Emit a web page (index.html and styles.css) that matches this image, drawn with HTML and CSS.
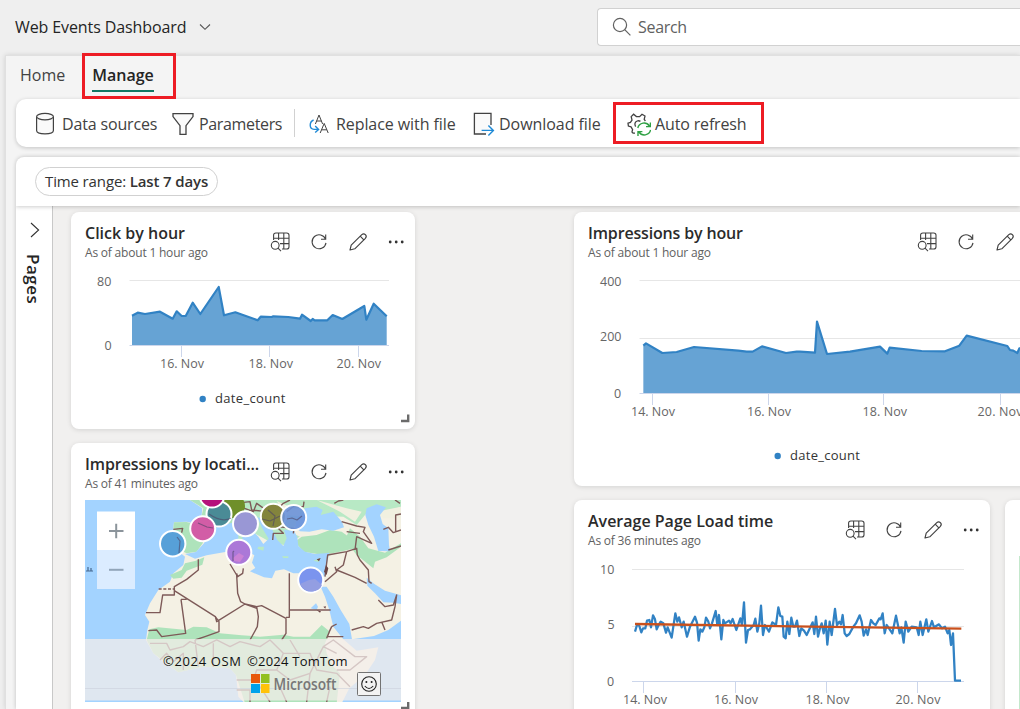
FILE: index.html
```html
<!DOCTYPE html>
<html lang="en">
<head>
<meta charset="utf-8">
<title>Web Events Dashboard</title>
<link rel="stylesheet" href="styles.css">
</head>
<body>
<svg class="defs" width="0" height="0">
  <symbol id="explore" viewBox="0 0 20 20"><g fill="none" stroke="#424242" stroke-width="1.1">
    <path d="M3.6 8V3.3Q3.6 1 5.9 1H16.7Q19 1 19 3.3V14.7Q19 17 16.7 17H12M8.6 1V8M13.8 1V17M3.6 6.2H19M10 11.6H19"/>
    <circle cx="5.2" cy="13.3" r="3.9"/><path d="M8 16.2L11 19.2"/></g></symbol>
  <symbol id="reload" viewBox="0 0 20 20"><path d="M16.6 7.2A7 7 0 1 0 17 10.8M16.7 2.6V7.3H12" fill="none" stroke="#424242" stroke-width="1.1"/></symbol>
  <symbol id="pencil" viewBox="0 0 20 20"><path d="M2 18L3.2 13.2L13.8 2.6Q15.7 1 17.4 2.7T17.4 6.3L6.8 16.8ZM12.2 4.2L15.8 7.8" fill="none" stroke="#424242" stroke-width="1.15" stroke-linejoin="round"/></symbol>
  <symbol id="more" viewBox="0 0 20 20"><g fill="#333"><circle cx="3.2" cy="10" r="1.4"/><circle cx="9.2" cy="10" r="1.4"/><circle cx="15.2" cy="10" r="1.4"/></g></symbol>
</svg>

<header class="header">
  <span class="app-title">Web Events Dashboard</span>
  <svg class="chev" width="12" height="8" viewBox="0 0 12 8"><path d="M1 1.5L6 6.3L11 1.5" fill="none" stroke="#555" stroke-width="1.1"/></svg>
  <div class="search">
    <svg width="20" height="20" viewBox="0 0 20 20"><g fill="none" stroke="#616161" stroke-width="1.2"><circle cx="8" cy="8" r="6.6"/><path d="M12.7 12.7L18.4 18.4"/></g></svg>
    <span class="search-text">Search</span>
  </div>
</header>

<div class="shell">
  <nav class="tabs">
    <span class="tab">Home</span>
    <span class="tab active">Manage<i class="mark mark-tab"></i></span>
  </nav>

  <div class="toolbar">
    <div class="tool t-data">
      <svg width="20" height="24" viewBox="0 0 20 24"><g fill="#fafafa" stroke="#424242" stroke-width="1.2"><path d="M1.6 5V18.5C1.6 23 18.4 23 18.4 18.5V5"/><ellipse cx="10" cy="4.6" rx="8.4" ry="3.2"/></g></svg>
      <span>Data sources</span>
    </div>
    <div class="tool t-param">
      <svg width="22" height="24" viewBox="0 0 22 24"><path d="M1 1.6H21V4.6L14 13.6V22.4H8V13.6L1 4.6Z" fill="#fafafa" stroke="#424242" stroke-width="1.3"/></svg>
      <span>Parameters</span>
    </div>
    <i class="divider"></i>
    <div class="tool t-replace">
      <svg width="20" height="20" viewBox="0 0 20 20"><g fill="none" stroke="#424242" stroke-width="1"><path d="M6.4 10L10 1L13.6 10M7.6 7H12.4"/><path d="M11.2 19L15.2 9.4L19.2 19M12.6 15.8H17.8"/></g><path d="M4.6 6C.2 8-.2 14.8 5.2 15.4H9.6M6.2 12L9.6 15.4L6.2 18.6" fill="none" stroke="#1f8ad6" stroke-width="1.4"/></svg>
      <span>Replace with file</span>
    </div>
    <div class="tool t-down">
      <svg width="22" height="24" viewBox="0 0 22 24"><path d="M18 13V1.4H1.4V22H13" fill="#fafafa" stroke="#424242" stroke-width="1.3"/><path d="M8.6 18.4H20.4M15.4 13.4L20.4 18.4L15.4 23.4" fill="none" stroke="#1f8ad6" stroke-width="1.4"/></svg>
      <span>Download file</span>
    </div>
    <div class="tool t-auto">
      <svg width="24" height="24" viewBox="0 0 24 24"><g fill="none" stroke="#424242" stroke-width="1.3"><path d="M8 21.2Q5 21.4 5 19.8L5.6 17.6L4 14.8L1.4 14L1 11.2L3.4 10.4L5 8L4.2 4.6L6.6 2.2L9.4 4.6H12.6L15 2.2L18 4L17.2 7.4L18.4 9"/><path d="M8.6 14.6Q6.6 10.6 10.2 9Q12 8.4 13.4 9.4"/></g><g fill="none" stroke="#2ea043" stroke-width="1.4"><path d="M10.8 16A6.4 6.4 0 0 1 22.4 14M23.4 10.4V14.6H19"/><path d="M23.6 18A6.4 6.4 0 0 1 12 20M11 24V19.6H15.4"/></g></svg>
      <span>Auto refresh</span>
      <i class="mark mark-auto"></i>
    </div>
  </div>

  <div class="dashboard">
    <div class="filters"><div class="pill">Time range: <b>Last 7 days</b></div></div>
    <div class="content">
      <aside class="pages">
        <svg width="10" height="16" viewBox="0 0 10 16"><path d="M1 1L8.6 8L1 15" fill="none" stroke="#333" stroke-width="1.1"/></svg>
        <span class="pages-label">Pages</span>
      </aside>
      <main class="canvas">
        <div class="col-left">
          <section class="card card-click">
            <div class="card-head">
              <div class="names"><h2 class="n-click">Click by hour</h2><p class="s-click">As of about 1 hour ago</p></div>
              <div class="actions"><svg><use href="#explore"/></svg><svg><use href="#reload"/></svg><svg><use href="#pencil"/></svg><svg><use href="#more"/></svg></div>
            </div>
            <svg class="chart" width="344" height="160" viewBox="71 269 344 160">
              <path d="M129.500 280.500H389" stroke="#e6e6e6"/>
              <path d="M132 345.500V315.700L137.700 312.700L145 314L160 311.700L172.700 318.700L176.700 311.300L181.700 316L185.700 316L192.700 302.700L200.300 314L218.700 287L224 315.300L235.300 312.300L257.700 320.300L260.700 316.700L271.700 317L273.300 316.300L288.300 317L300 318.700L302 314.700L310.700 321L312.700 319L314.700 320.300H327.300L332.700 315L342.300 319L364.300 306L366.300 319.700L373.700 303.700L386.700 316.300V345.500Z" fill="#66a3d4"/>
              <path d="M132 315.700L137.700 312.700L145 314L160 311.700L172.700 318.700L176.700 311.300L181.700 316L185.700 316L192.700 302.700L200.300 314L218.700 287L224 315.300L235.300 312.300L257.700 320.300L260.700 316.700L271.700 317L273.300 316.300L288.300 317L300 318.700L302 314.700L310.700 321L312.700 319L314.700 320.300H327.300L332.700 315L342.300 319L364.300 306L366.300 319.700L373.700 303.700L386.700 316.300" fill="none" stroke="#3182c4" stroke-width="2.2" stroke-linejoin="round"/>
              <path d="M129.500 345.500H389M181.500 346V357M269.500 346V357M358.500 346V357" stroke="#ccd6eb"/>
              <g class="axis"><text x="97" y="286" textLength="14.500">80</text><text x="104.500" y="350">0</text><text x="160" y="368" textLength="44">16. Nov</text><text x="248.500" y="368" textLength="44.500">18. Nov</text><text x="336.500" y="368" textLength="44.500">20. Nov</text></g>
              <circle cx="202.700" cy="399" r="3.200" fill="#3182c4"/><text class="legend" x="215" y="403" textLength="70.500">date_count</text>
              <path d="M401 421H408.200V414.500" fill="none" stroke="#6b6b6b" stroke-width="2.400"/>
            </svg>
          </section>
          <section class="card card-map">
            <div class="card-head">
              <div class="names"><h2 class="n-loc">Impressions by locati...</h2><p class="s-loc">As of 41 minutes ago</p></div>
              <div class="actions"><svg><use href="#explore"/></svg><svg><use href="#reload"/></svg><svg><use href="#pencil"/></svg><svg><use href="#more"/></svg></div>
            </div>
            <svg class="chart map" width="344" height="209" viewBox="71 500 344 209">
              <defs><clipPath id="mapclip"><rect x="85" y="500" width="316" height="202"/></clipPath></defs>
              <g clip-path="url(#mapclip)">
                <rect x="85" y="500" width="316" height="202" fill="#a3d3ff"/>
                <g transform="translate(70 440) scale(.33333)">
                  <path fill="#f4f1e4" d="M360 180H993V790H525L505 770L498 705L480 685L400 680L325 697L285 670L250 640L228 600L232 570L238 545L225 525L240 490L265 450L300 425L310 400L340 375L345 350L315 325L325 285L310 265L312 247L350 245L392 255L397 205Z"/>
                  <path fill="#aee3bb" d="M310 265L312 247L350 246L388 257L400 205L360 180H560L560 250L410 270L398 310L380 335L350 340L318 325L325 290ZM375 363L403 352L397 374L350 392L335 413L310 416L300 405L335 390L345 370Z"/>
                  <path fill="#b8e9c5" d="M500 180H993V200L950 215L900 205L885 225L860 255L820 230L700 225L660 275L690 290L640 315L590 300L500 250Z"/>
                  <path fill="#f1f0e0" d="M620 183L660 200L690 215L640 213ZM740 180L830 205L875 215L855 245L810 215ZM640 210L690 205L690 228L640 225ZM920 215L993 200V235L940 235Z"/>
                  <path fill="#aee3bb" d="M675 305L695 290L740 285L780 270L815 275L850 300L855 325L810 335L760 345L700 335ZM840 265L870 290L895 325L945 338L993 310L993 320L950 352L915 365L910 385L860 345L825 300Z"/>
                  <path fill="#aee3bb" d="M238 568L265 562L350 570L370 560L410 562L450 580L515 586L570 590L640 584L670 590L720 590L755 555L780 575L765 610L770 640L790 680L810 700L800 790H525L498 705L480 685L400 680L325 697L250 640L230 600Z"/>
                  <!-- Mediterranean basin -->
                  <path fill="#a3d3ff" d="M345 342L378 336L402 310L415 285L445 258L500 245L522 240L538 262L565 290L580 312L596 296L575 262L562 230L580 240L606 268L622 300L640 318L650 295L642 270L672 272L682 292L685 318L705 335L735 342L765 340L778 338L772 365L766 405L755 420L705 400H670L642 388L616 392L606 415L582 412L540 394L556 384L546 368L553 346L538 337L510 334L470 335L410 346L375 356Z"/>
                  <path fill="#b8e9c5" d="M505 275L516 272L518 310L505 315ZM565 320H582L580 332L562 326ZM730 362L750 354L746 366ZM636 349H655V354H640Z"/>
                  <path fill="#a3d3ff" d="M675 262L682 235L698 218L705 205L740 200L758 210L752 225L790 215L816 245L822 262L790 272L755 268L718 275L690 274ZM890 205L920 193L948 202L930 225L938 252L955 265L957 315L960 334L925 333L912 290L895 255L886 225ZM890 413L912 431L945 452L993 466V492L970 488L940 487L915 460L892 437Z"/>
                  <!-- Red Sea, Gulf of Aden and the Indian Ocean -->
                  <path fill="#a3d3ff" d="M752 440L770 440L790 470L812 510L838 552L846 598L912 588L955 570L993 542V790H815L838 745L885 705L915 660L925 622L860 632L820 598L790 560L778 510L765 470Z"/>
                  <path fill="#a3d3ff" d="M722 505L738 490L744 500L740 510Z"/>
                  <path class="borders" d="M385 358V390L350 418L313 440V465H278L270 518H228M313 452L436 530L440 545L525 492L560 505M333 478L347 580L275 590L260 570L235 572M333 478H350M436 530L447 545L447 575L405 590L375 600M480 372L500 405L503 460L512 485L525 492M520 385L518 400L503 410L500 400M525 492L560 500L575 497L648 535M658 400V532H648M658 510H782M648 535V580L635 600M560 500L565 530L562 560L540 600M785 560L800 552M770 595L778 575L785 560M770 590H820"/>
                  <path class="borders" d="M765 410L773 345L830 335L860 325L862 345L870 360L895 390L897 425L905 430M830 335L820 375L800 390L855 412L890 430M765 425L800 395L795 380M815 245L860 258L885 262L880 275L905 310L860 290L855 330M830 275L870 280M845 570L880 560L895 565L920 550L965 540L975 500L980 465L970 495L945 500L925 480M935 545L945 570M940 268L955 262L970 278L993 270M955 330L993 318M993 222L977 225V275M793 190L805 183L820 180M990 190L975 180"/>
                  <path class="borders" d="M510 200L550 215L560 190L595 215L620 210L640 190L660 180M515 188L540 185L545 210L590 215M580 245L620 260L640 280L610 280L608 300M620 260L672 265L670 280M575 220L580 240L600 250M650 215L670 200L700 200L702 185M310 268L338 265L335 278"/>
                  <path class="borders" stroke-dasharray="9 5" d="M266 447H312"/>
                  <path fill="#6b4545" d="M740 358L752 354L747 364ZM740 510L753 514L750 518ZM760 500L768 499L766 506ZM768 375L775 385L770 405L762 395Z"/>
                  <path class="borders" d="M240 610H290L300 630L340 620L360 605L400 620L440 600L480 620L510 605L570 620L600 600L640 640L620 690L660 720L720 700L760 620L800 640M270 660L290 640L310 665L340 640V690M375 600L385 680M430 610V680M500 720H550L560 690L620 690M500 750H540V786M640 640L720 640L740 690L800 700L840 740M620 720L650 786M720 700L710 786M760 620L790 600L855 650L890 650L840 690H800M660 600L690 650M570 740L600 786M780 740L770 786"/>
                </g>
                <g stroke="#fff" stroke-width="2">
                  <circle cx="233" cy="506" r="12" fill="#6f8f2a" stroke="none"/><circle cx="219" cy="514" r="12.500" fill="#4a8b96"/>
                  <circle cx="212" cy="495" r="12.500" fill="#b5117b"/><circle cx="202.700" cy="528.700" r="12.500" fill="#d25da6"/>
                  <circle cx="172.700" cy="543.700" r="12.700" fill="#57a0d8"/><circle cx="245.500" cy="523.700" r="12.500" fill="#9997d5"/>
                  <circle cx="238.800" cy="552.300" r="12.500" fill="#ab78d8"/><circle cx="273.300" cy="516.300" r="12.500" fill="#83843d"/>
                  <circle cx="293.700" cy="517.500" r="12.500" fill="#6a91d8" fill-opacity=".9"/><circle cx="310.700" cy="580" r="12.500" fill="#7b94ee"/>
                </g>
                <path d="M309 580L315 579L322 585Q320 591 311 591.500Q303 591 300 584Z" fill="#939ee2"/>
                <path d="M233 558L239 553L244 556L240 562L234 561Z" fill="#cb82d6"/>
                <g class="borders thin"><path d="M177 537L180 541L179 553M198 523L207 527L213 528M209 514Q222 523 231 518M262 519L270 521L280 516M268 510L275 516L273 526M287 519L292 518L297 520L302 516M233 561V552L234 551"/></g>
                <rect x="85" y="639" width="316" height="61.500" fill="#f4eeeb" fill-opacity=".74"/>
                <path d="M85 688.500H401" stroke="#cbd0dc" stroke-opacity=".6"/>
              </g>
              <path d="M86 571H93M88 567V571M91 568V571" stroke="#47688f" fill="none" stroke-width="1.200"/>
              <rect x="97" y="511.500" width="38" height="38.500" fill="#fff"/><rect x="97" y="550" width="38" height="39" fill="#dbecff"/>
              <path d="M109 531H123.500M116.200 523.800V538.200" stroke="#8b949b" stroke-width="2"/><path d="M109 569.800H123.500" stroke="#91a5b9" stroke-width="2"/>
              <text class="copy" x="163" y="666" textLength="78">©2024 OSM</text><text class="copy" x="247" y="666" textLength="100.500">©2024 TomTom</text>
              <path fill="#e8590c" d="M251 674H260V683H251Z"/><path fill="#92c020" d="M261 674H269.500V683H261Z"/><path fill="#00a2ea" d="M251 684H260V693H251Z"/><path fill="#ffc20a" d="M261 684H269.500V693H261Z"/>
              <text class="ms" x="273.500" y="690" textLength="63" lengthAdjust="spacingAndGlyphs">Microsoft</text>
              <rect x="357.500" y="672.500" width="23" height="23" rx="1" fill="#f3f3f3" stroke="#737373"/>
              <g fill="none" stroke="#222" stroke-width="1.100"><circle cx="369" cy="684" r="7.300"/><path d="M364.800 686Q369 691 373.200 686"/></g><circle cx="366.400" cy="682" r="1" fill="#222"/><circle cx="371.600" cy="682" r="1" fill="#222"/>
              <path d="M401 708H408.200V702" fill="none" stroke="#6b6b6b" stroke-width="2.400"/>
            </svg>
          </section>
        </div>

        <div class="col-right">
          <section class="card card-imp">
            <div class="card-head">
              <div class="names"><h2 class="n-imp">Impressions by hour</h2><p class="s-click">As of about 1 hour ago</p></div>
              <div class="actions"><svg><use href="#explore"/></svg><svg><use href="#reload"/></svg><svg><use href="#pencil"/></svg><svg><use href="#more"/></svg></div>
            </div>
            <svg class="chart" width="446" height="216" viewBox="574 269 446 216">
              <path d="M639.500 280.500H1020M639.500 338.500H1020" stroke="#e6e6e6"/>
              <g transform="translate(565 205) scale(.33333)">
                <path d="M235 565V422L243 415L292 444L335 441L387 426L520 437L545 440H563L591 424L663 444L695 440H705L750 443L756 350L786 447L855 440L945 425L967 446L974 428L1070 438L1140 439L1183 422L1205 392L1327 423L1335 435L1345 437L1357 444L1363 430L1380 428V565Z" fill="#66a3d4"/>
                <path d="M235 422L243 415L292 444L335 441L387 426L520 437L545 440H563L591 424L663 444L695 440H705L750 443L756 350L786 447L855 440L945 425L967 446L974 428L1070 438L1140 439L1183 422L1205 392L1327 423L1335 435L1345 437L1357 444L1363 430L1380 428" fill="none" stroke="#3182c4" stroke-width="6.600" stroke-linejoin="round"/>
              </g>
              <path d="M639.500 393.500H1020M652.500 394V405M768.500 394V405M883.500 394V405M1000.500 394V405" stroke="#ccd6eb"/>
              <g class="axis"><text x="600" y="286" textLength="21.500">400</text><text x="600" y="341" textLength="21.500">200</text><text x="614" y="398">0</text><text x="631" y="416" textLength="44">14. Nov</text><text x="747" y="416" textLength="44">16. Nov</text><text x="862.500" y="416" textLength="44.500">18. Nov</text><text x="977.500" y="416" textLength="45">20. Nov</text></g>
              <circle cx="777.700" cy="456" r="3.200" fill="#3182c4"/><text class="legend" x="790" y="460" textLength="70">date_count</text>
            </svg>
          </section>
          <div class="row">
            <section class="card card-load">
              <div class="card-head">
                <div class="names"><h2 class="n-load">Average Page Load time</h2><p class="s-loc">As of 36 minutes ago</p></div>
                <div class="actions"><svg><use href="#explore"/></svg><svg><use href="#reload"/></svg><svg><use href="#pencil"/></svg><svg><use href="#more"/></svg></div>
              </div>
              <svg class="chart" width="416" height="152" viewBox="574 557 416 152">
                <path d="M632 569.500H964M632 626.500H964" stroke="#e6e6e6"/>
                <path d="M632 681.500H964M643.500 682V693M735.500 682V693M826.500 682V693M917.500 682V693" stroke="#ccd6eb"/>
                <g transform="translate(565 490) scale(.33333)" fill="none" stroke-width="6.800" stroke-linejoin="round">
                  <polyline stroke="#3182c4" points="210,425 216,405 222,405 229,427 234,415 241,415 246,392 253,390 258,412 264,376 270,388 275,418 281,405 287,395 295,400 303,428 308,412 320,443 331,370 337,395 342,382 350,412 356,395 366,440 375,410 390,380 396,398 401,452 406,418 412,425 418,412 423,383 430,395 435,415 441,400 452,363 457,405 462,375 469,448 475,390 480,400 492,392 497,400 503,387 514,420 526,385 531,405 537,337 543,458 549,420 555,418 566,405 571,386 577,425 583,400 588,347 594,435 600,405 612,425 622,397 633,405 640,352 646,378 652,380 656,440 662,445 667,395 673,432 679,383 685,410 690,410 696,392 703,438 709,415 717,422 725,435 743,397 748,432 753,380 759,440 765,415 770,400 776,430 782,392 787,464 794,395 800,435 810,357 816,405 823,395 828,403 833,375 839,430 845,438 853,432 865,410 873,400 884,376 890,395 896,437 903,418 908,435 918,390 925,400 932,405 943,385 947,388 953,370 959,430 965,405 970,412 982,430 993,377 1004,430 1009,412 1016,458 1022,395 1030,425 1040,410 1055,412 1061,435 1066,395 1073,435 1084,388 1090,425 1101,393 1107,412 1122,403 1131,415 1140,410 1148,430 1153,420 1158,465 1164,430 1170,572 1188,572"/>
                  <path stroke="#c9501c" d="M210 402L685 409L1189 416"/>
                </g>
                <g class="axis"><text x="600" y="574" textLength="14.500">10</text><text x="607.500" y="629">5</text><text x="607" y="686">0</text><text x="623" y="704" textLength="44">14. Nov</text><text x="714" y="704" textLength="44">16. Nov</text><text x="805.500" y="704" textLength="44">18. Nov</text><text x="895.500" y="704" textLength="45">20. Nov</text></g>
              </svg>
            </section>
            <section class="card card-next"><div class="next-map"></div></section>
          </div>
        </div>
      </main>
    </div>
  </div>
</div>
</body>
</html>
```
FILE: styles.css
```css
* { box-sizing: border-box; }
body { margin: 0; width: 1020px; height: 709px; overflow: hidden; background: #efefef; font-family: "Open Sans", "Noto Sans", sans-serif; color: #242424; display: flex; flex-direction: column; }
.defs { display: none; }
.header { height: 55px; flex: none; display: flex; align-items: center; padding: 0 0 1px 15px; }
.app-title { font-size: 16px; width: 171px; white-space: nowrap; letter-spacing: -.1px; }
.chev { margin-left: 13px; }
.search { margin-left: auto; width: 423px; height: 38px; border: 1px solid #d1d1d1; border-right: 0; border-radius: 4px 0 0 4px; background: #fff; display: flex; align-items: center; gap: 6px; padding-left: 14px; }
.search-text { font-size: 16px; color: #616161; letter-spacing: -.3px; }
.shell { margin-left: 5px; flex: 1; min-height: 0; background: #f4f4f4; border: 1px solid #e0e0e0; border-width: 1px 0 0 1px; box-shadow: 0 0 5px rgba(0,0,0,.13); display: flex; flex-direction: column; padding-left: 10px; }
.tabs { height: 43px; flex: none; display: flex; gap: 27px; padding: 5px 0 0 4px; }
.tab { height: 31px; line-height: 28px; font-size: 16px; color: #424242; position: relative; }
.tab.active { font-weight: 600; color: #242424; border-bottom: 2px solid #117865; }
.mark { position: absolute; border: 3px solid #ed1c24; pointer-events: none; }
.mark-tab { left: -10px; top: -8px; width: 94px; height: 46px; }
.mark-auto { left: -14px; top: 3px; width: 151px; height: 42px; }
.toolbar { height: 48px; flex: none; background: #fff; border-radius: 10px 0 0 10px; box-shadow: 0 1px 4px rgba(0,0,0,.2); display: flex; align-items: stretch; padding-left: 19px; font-size: 16px; color: #424242; }
.tool { display: flex; align-items: center; position: relative; white-space: nowrap; flex: none; letter-spacing: -.15px; padding-top: 1px; }
.t-data { width: 137px; gap: 7px; }
.t-param { width: 122px; gap: 5px; letter-spacing: -.35px; }
.divider { width: 1px; height: 28px; background: #d1d1d1; align-self: center; margin-right: 14px; }
.t-replace { width: 164px; gap: 7px; letter-spacing: -.08px; }
.t-down { width: 154px; gap: 4px; letter-spacing: -.05px; }
.t-auto { gap: 4px; }
.dashboard { margin-top: 10px; flex: 1; min-height: 0; display: flex; flex-direction: column; border-radius: 8px 0 0 0; box-shadow: 0 0 4px rgba(0,0,0,.22); background: #fff; overflow: hidden; }
.filters { height: 49px; flex: none; display: flex; align-items: center; padding-left: 19px; box-shadow: 0 1px 4px rgba(0,0,0,.2); position: relative; }
.pill { width: 183px; height: 29px; border: 1px solid #d1d1d1; border-radius: 15px; padding-left: 9px; line-height: 27px; font-size: 15px; letter-spacing: -.13px; color: #333; white-space: nowrap; }
.pill b { font-weight: 600; }
.content { flex: 1; min-height: 0; display: flex; }
.pages { width: 37px; flex: none; border-right: 1px solid #c8c8c8; display: flex; flex-direction: column; align-items: center; padding: 16px 0 0 1px; gap: 16px; }
.pages-label { writing-mode: vertical-rl; font-size: 17px; font-weight: 600; line-height: 24px; letter-spacing: .5px; margin-left: -4px; }
.canvas { flex: 1; min-width: 0; background: #f1f0ef; display: flex; gap: 159px; padding: 6px 0 0 18px; overflow: hidden; }
.col-left { width: 344px; flex: none; display: flex; flex-direction: column; gap: 14px; }
.col-right { width: 520px; flex: none; display: flex; flex-direction: column; gap: 14px; }
.row { display: flex; gap: 15px; }
.card { background: #fff; border-radius: 8px; box-shadow: 0 1px 5px rgba(0,0,0,.12); overflow: hidden; flex: none; }
.card-click { height: 217px; }
.card-map, .card-load, .card-next { height: 300px; }
.card-imp { height: 274px; width: 487px; }
.card-load { width: 416px; }
.card-next { width: 100px; padding: 56px 0 0 14px; }
.next-map { height: 200px; background: #c4e8cc; }
.card-head { height: 57px; display: flex; justify-content: space-between; padding: 9px 8px 0 14px; }
.names { white-space: nowrap; }
.names h2 { margin: 0; font-size: 16px; line-height: 24px; font-weight: 600; color: #2b2b2b; }
.names .n-imp { letter-spacing: -.16px; }
.names .n-loc { letter-spacing: -.09px; }
.names p { margin: 0; font-size: 12px; line-height: 16px; color: #616161; letter-spacing: -.2px; }
.actions { display: flex; gap: 19px; padding-top: 11px; }
.card-map .actions { padding-top: 10px; }
.card-imp .actions { padding-right: 0; margin-right: -1px; }
.actions svg { width: 20px; height: 20px; flex: none; }
.chart { display: block; }
.axis { font-size: 12.5px; fill: #666; }
.legend { font-size: 13px; fill: #333; }
.copy { font-size: 13px; fill: #111; }
.ms { font-size: 16px; font-weight: 600; fill: #777; }
.borders { fill: none; stroke: #7d5a58; stroke-width: 4.2; stroke-linejoin: round; }
.thin path { stroke: #4d4466; stroke-width: 1.2; stroke-opacity: .6; }
```
